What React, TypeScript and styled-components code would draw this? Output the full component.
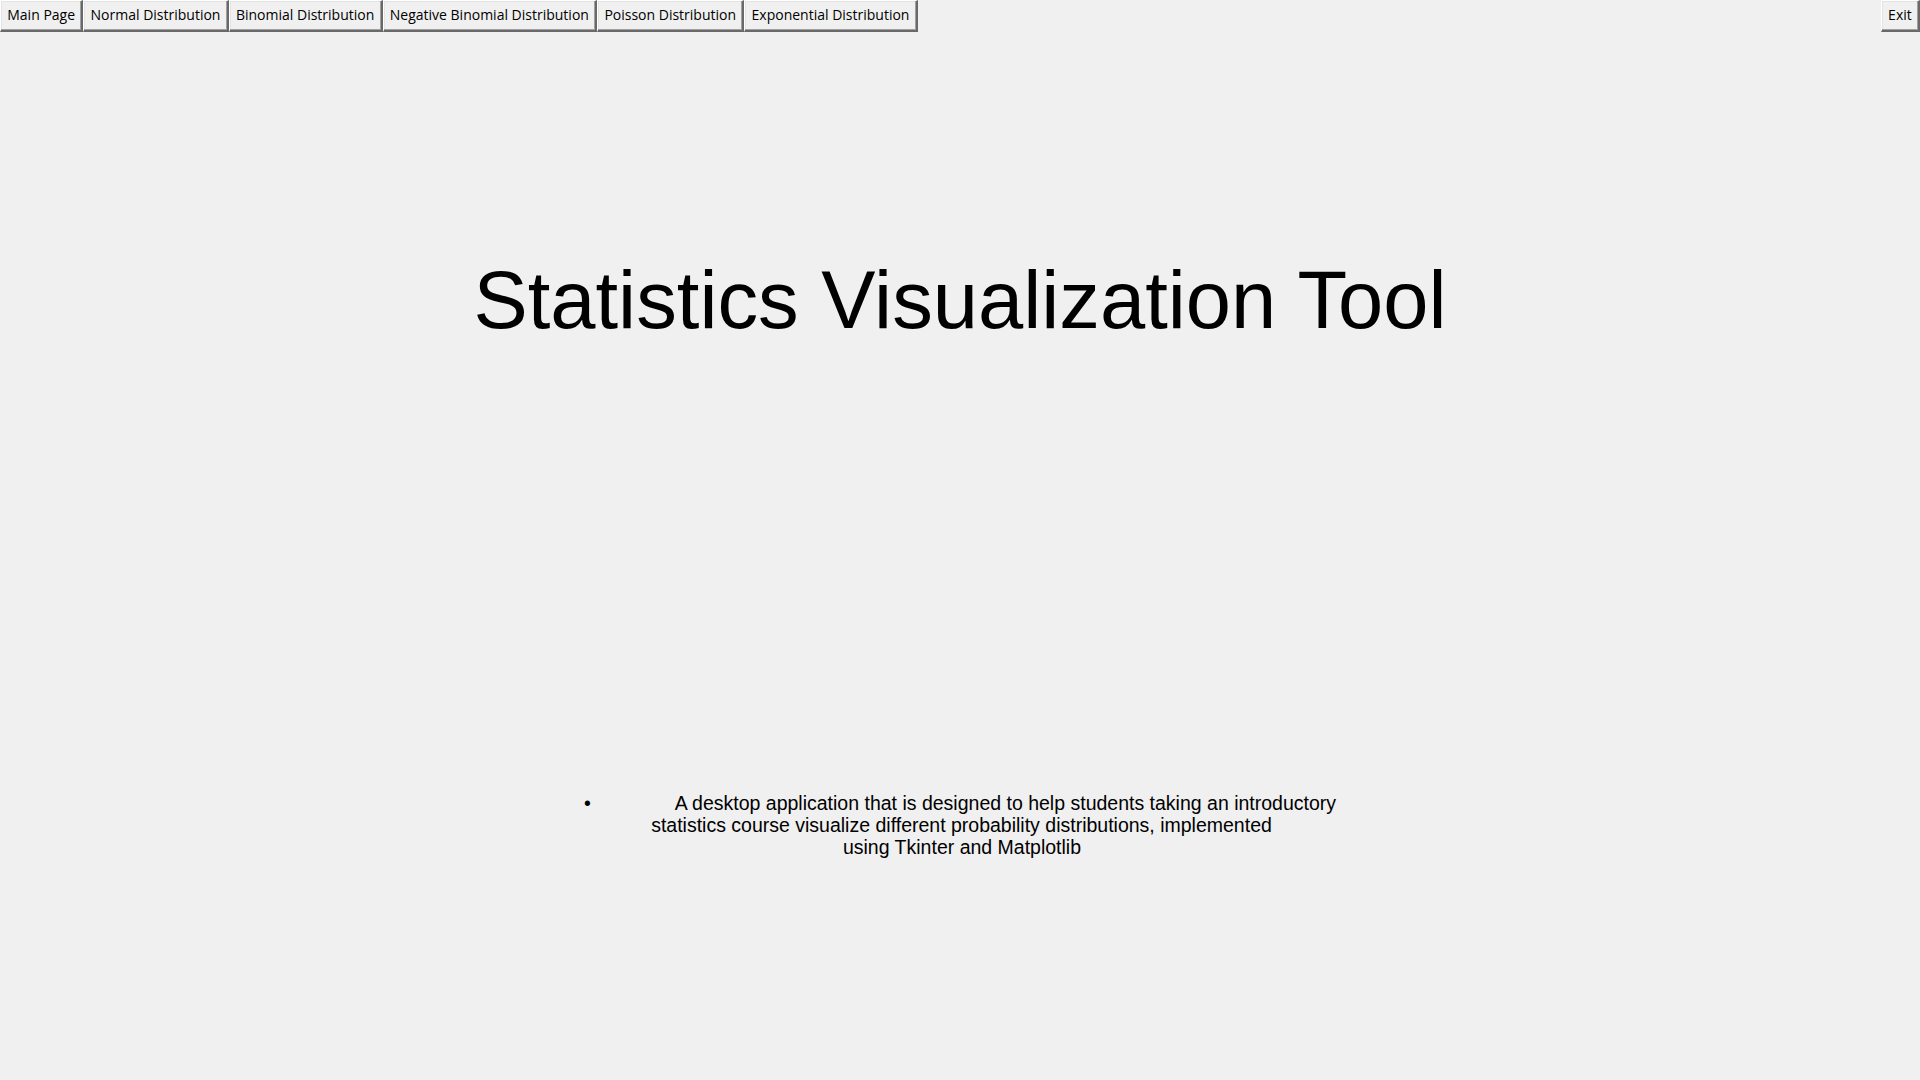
import React from "react";
import styled, { createGlobalStyle } from "styled-components";

const GlobalStyle = createGlobalStyle`
  html, body {
    margin: 0;
    padding: 0;
    background: #f0f0f0;
  }
  body {
    width: 1920px;
    height: 1080px;
    overflow: hidden;
  }
`;

const Window = styled.div`
  width: 1920px;
  height: 1080px;
  background: #f0f0f0;
  display: flex;
  flex-direction: column;
`;

const Toolbar = styled.div`
  display: flex;
  align-items: flex-start;
  height: 32px;
`;

const TabButton = styled.button<{ $push?: boolean }>`
  box-sizing: border-box;
  height: 32px;
  margin: 0;
  margin-left: ${(p) => (p.$push ? "auto" : "0")};
  padding: 0 6.25px 1px 6.25px;
  background: #f0f0f0;
  color: #000;
  font-family: "Open Sans", "Noto Sans", sans-serif;
  font-size: 14px;
  line-height: 1;
  border-style: solid;
  border-width: 1px 2px 2px 1px;
  border-color: #ffffff #696969 #696969 #ffffff;
  box-shadow: inset -1px -1px 0 #a0a0a0, inset 1px 1px 0 #e3e3e3;
  white-space: nowrap;
  cursor: pointer;
`;

const Main = styled.main`
  display: flex;
  flex-direction: column;
  align-items: center;
`;

const Title = styled.h1`
  margin: 227px 0 0 0;
  font-family: "Liberation Sans", Arial, sans-serif;
  font-weight: 400;
  font-size: 81.3px;
  line-height: 1;
  color: #000;
  white-space: nowrap;
`;

const Description = styled.div`
  margin-top: 452px;
  font-family: "Liberation Sans", Arial, sans-serif;
  font-size: 19.5px;
  line-height: 22px;
  color: #000;
  text-align: center;
  display: flex;
  flex-direction: column;
  align-items: center;
`;

const Line = styled.div<{ $shift?: number }>`
  white-space: pre;
  padding-left: ${(p) => p.$shift ?? 0}px;
`;

const Bullet = styled.span`
  display: inline-block;
  margin-right: 84px;
`;

const tabs = [
  "Main Page",
  "Normal Distribution",
  "Binomial Distribution",
  "Negative Binomial Distribution",
  "Poisson Distribution",
  "Exponential Distribution",
];

export default function App() {
  return (
    <Window>
      <GlobalStyle />
      <Toolbar>
        {tabs.map((t) => (
          <TabButton key={t}>{t}</TabButton>
        ))}
        <TabButton $push>Exit</TabButton>
      </Toolbar>
      <Main>
        <Title>Statistics Visualization Tool</Title>
        <Description>
          <Line $shift={-5}>
            <Bullet>•</Bullet>A desktop application that is designed to help students taking an introductory
          </Line>
          <Line $shift={3}>statistics course visualize different probability distributions, implemented</Line>
          <Line $shift={4}>using Tkinter and Matplotlib</Line>
        </Description>
      </Main>
    </Window>
  );
}
